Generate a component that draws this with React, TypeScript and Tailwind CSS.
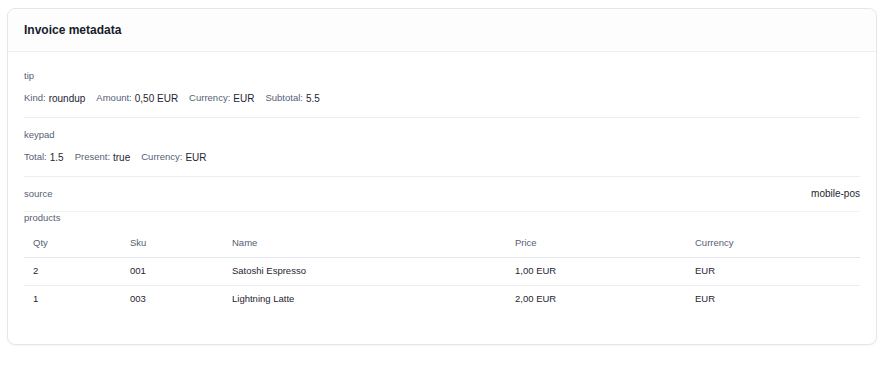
const tip = [
  ["Kind", "roundup"],
  ["Amount", "0,50 EUR"],
  ["Currency", "EUR"],
  ["Subtotal", "5.5"],
];

const keypad = [
  ["Total", "1.5"],
  ["Present", "true"],
  ["Currency", "EUR"],
];

const products = [
  { qty: "2", sku: "001", name: "Satoshi Espresso", price: "1,00 EUR", currency: "EUR" },
  { qty: "1", sku: "003", name: "Lightning Latte", price: "2,00 EUR", currency: "EUR" },
];

function Fields({ items }: { items: string[][] }) {
  return (
    <div className="mt-[7px] flex h-4 items-center gap-x-[11px]">
      {items.map(([label, value]) => (
        <span key={label} className="flex items-center gap-[3px]">
          <span className="text-[9.5px] text-[#566074]">{label}:</span>
          <span className="text-[10px] text-[#1f2533]">{value}</span>
        </span>
      ))}
    </div>
  );
}

function Section({ title, items }: { title: string; items: string[][] }) {
  return (
    <div className="border-b border-[#eceef2] pt-[10px] pb-[11px]">
      <div className="h-[14px] text-[9.5px] leading-[14px] text-[#566074]">{title}</div>
      <Fields items={items} />
    </div>
  );
}

export default function App() {
  return (
    <div className="min-h-screen bg-white pt-2 pl-[7px] font-['Liberation_Sans',Arial,sans-serif]">
      <div className="w-[870px] overflow-hidden rounded-lg border border-[#e2e6ed] bg-white shadow-[0_1px_2px_rgba(15,23,42,0.04)]">
        {/* Header */}
        <div className="flex h-[43px] items-center border-b border-[#eceef2] bg-[#fdfdfe] px-4">
          <h2 className="text-[12px] font-bold text-[#161c2b]">Invoice metadata</h2>
        </div>

        {/* Body */}
        <div className="px-4 pt-[7px] pb-[31px]">
          <Section title="tip" items={tip} />
          <Section title="keypad" items={keypad} />

          <div className="flex items-center justify-between border-b border-[#f0f2f5] pt-[10px] pb-[10px]">
            <span className="h-[14px] text-[9.5px] leading-[14px] text-[#566074]">source</span>
            <span className="text-[10px] leading-[14px] text-[#1f2533]">mobile-pos</span>
          </div>

          <div className="h-[14px] text-[9.5px] leading-[12px] text-[#566074]">products</div>

          <table className="mt-[4px] w-full table-fixed border-collapse text-[9.5px]">
            <colgroup>
              <col className="w-[97px]" />
              <col className="w-[102px]" />
              <col className="w-[283px]" />
              <col className="w-[180px]" />
              <col className="w-[174px]" />
            </colgroup>
            <thead>
              <tr className="h-[27px] border-b border-[#e3e6ec] text-left text-[#566074]">
                <th className="pl-[9px] font-normal">Qty</th>
                <th className="pl-[9px] font-normal">Sku</th>
                <th className="pl-[9px] font-normal">Name</th>
                <th className="pl-[9px] font-normal">Price</th>
                <th className="pl-[9px] font-normal">Currency</th>
              </tr>
            </thead>
            <tbody className="text-[#1f2533]">
              {products.map((p, i) => (
                <tr key={p.sku} className={i < products.length - 1 ? "h-[28px] border-b border-[#eceef2]" : "h-[28px]"}>
                  <td className="pl-[9px]">{p.qty}</td>
                  <td className="pl-[9px]">{p.sku}</td>
                  <td className="pl-[9px]">{p.name}</td>
                  <td className="pl-[9px]">{p.price}</td>
                  <td className="pl-[9px]">{p.currency}</td>
                </tr>
              ))}
            </tbody>
          </table>
        </div>
      </div>
    </div>
  );
}
